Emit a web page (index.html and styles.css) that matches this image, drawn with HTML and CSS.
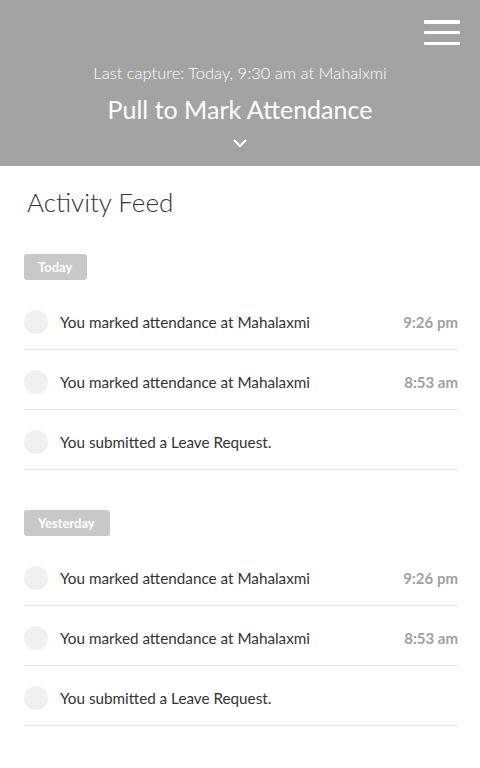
FILE: index.html
```html
<!DOCTYPE html>
<html lang="en">

<head>
    <meta charset="UTF-8">
    <meta name="viewport" content="width=device-width, initial-scale=1.0">
    <title>Activity Feed</title>
    <link rel="stylesheet" href="styles.css">
</head>

<body>

    <header class="pull-header">
        <div class="menu-row">
            <button class="menu-btn" aria-label="Menu">
                <span></span><span></span><span></span>
            </button>
        </div>
        <div class="last-capture">Last capture: Today, 9:30 am at Mahalxmi</div>
        <div class="pull-title">Pull to Mark Attendance</div>
        <svg class="chevron" viewBox="0 0 16 10">
            <polyline points="2,2 8,8 14,2" />
        </svg>
    </header>

    <main class="feed">
        <h1 class="feed-title">Activity Feed</h1>

        <section class="day-group">
            <div class="day-badge">Today</div>
            <ul class="feed-list">
                <li class="feed-item">
                    <span class="avatar"></span>
                    <span class="feed-text">You marked attendance at Mahalaxmi</span>
                    <span class="feed-time">9:26 pm</span>
                </li>
                <li class="feed-item">
                    <span class="avatar"></span>
                    <span class="feed-text">You marked attendance at Mahalaxmi</span>
                    <span class="feed-time">8:53 am</span>
                </li>
                <li class="feed-item">
                    <span class="avatar"></span>
                    <span class="feed-text">You submitted a Leave Request.</span>
                </li>
            </ul>
        </section>

        <section class="day-group">
            <div class="day-badge">Yesterday</div>
            <ul class="feed-list">
                <li class="feed-item">
                    <span class="avatar"></span>
                    <span class="feed-text">You marked attendance at Mahalaxmi</span>
                    <span class="feed-time">9:26 pm</span>
                </li>
                <li class="feed-item">
                    <span class="avatar"></span>
                    <span class="feed-text">You marked attendance at Mahalaxmi</span>
                    <span class="feed-time">8:53 am</span>
                </li>
                <li class="feed-item">
                    <span class="avatar"></span>
                    <span class="feed-text">You submitted a Leave Request.</span>
                </li>
            </ul>
        </section>
    </main>

</body>

</html>
```

FILE: styles.css
```css
body {
    font-family: Lato, "Open Sans", sans-serif;
    margin: 0;
    padding: 0;
    background-color: #fff;
    color: #333;
}

.pull-header {
    height: 166px;
    box-sizing: border-box;
    background-color: #a3a3a3;
    color: #fff;
    text-align: center;
    padding-top: 20px;
}

.menu-row {
    display: flex;
    justify-content: flex-end;
    padding-right: 20px;
}

.menu-btn {
    width: 36px;
    height: 25px;
    padding: 0;
    border: none;
    background: none;
    display: flex;
    flex-direction: column;
    justify-content: space-between;
}

.menu-btn span {
    display: block;
    height: 3.5px;
    width: 100%;
    background-color: #fff;
    border-radius: 1px;
}

.last-capture {
    margin-top: 18px;
    font-size: 16.5px;
    font-weight: 300;
    line-height: 20px;
}

.pull-title {
    margin-top: 11px;
    font-size: 25px;
    font-weight: 400;
    line-height: 30px;
}

.chevron {
    display: block;
    margin: 14px auto 0;
    width: 16px;
    height: 10px;
    fill: none;
    stroke: #fff;
    stroke-width: 2;
}

.feed {
    padding: 0 22px 0 24px;
}

.feed-title {
    margin: 19px 0 0 3px;
    font-size: 26px;
    font-weight: 300;
    line-height: 34px;
    color: #333;
}

.day-group {
    margin-top: 35px;
}

.day-group + .day-group {
    margin-top: 40px;
}

.day-badge {
    display: inline-block;
    height: 26px;
    background-color: #c8c8c8;
    color: #fff;
    font-size: 13px;
    font-weight: 700;
    line-height: 26px;
    padding: 0 15px 0 14px;
    border-radius: 3px;
}

.feed-list {
    list-style: none;
    margin: 10px 0 0;
    padding: 0;
}

.feed-item {
    display: flex;
    align-items: center;
    padding: 20px 0 15px;
    border-bottom: 1px solid #e6e6e6;
}

.avatar {
    width: 24px;
    height: 24px;
    border-radius: 50%;
    background-color: #f0f0f0;
    flex-shrink: 0;
}

.feed-text {
    flex: 1;
    margin-left: 12px;
    font-size: 15.25px;
    color: #333;
}

.feed-time {
    font-size: 15px;
    font-weight: 700;
    color: #a0a0a0;
}
```
